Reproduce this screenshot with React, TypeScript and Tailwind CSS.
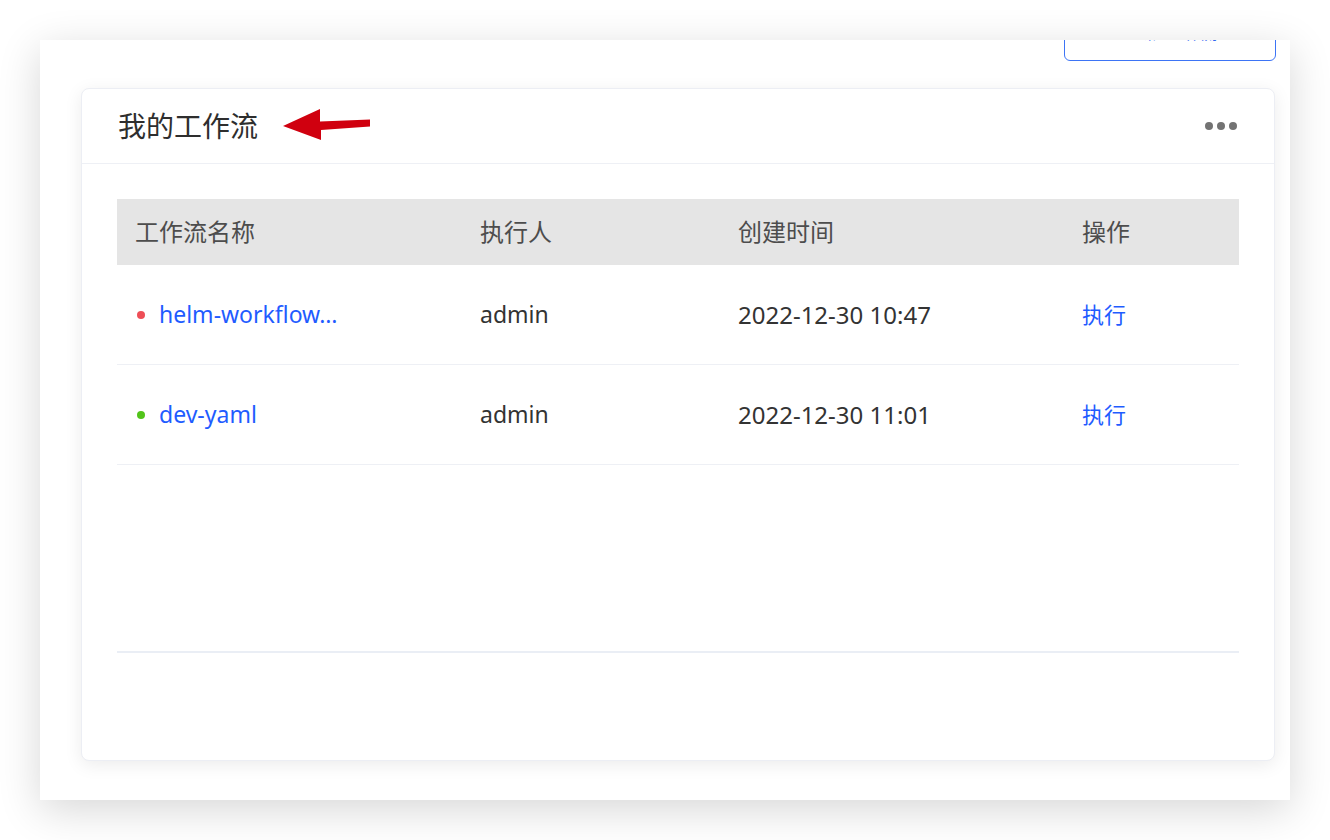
import React from 'react';

interface Workflow {
  name: string;
  status: 'failed' | 'passed';
  executor: string;
  createdAt: string;
}

const workflows: Workflow[] = [
  { name: 'helm-workflow…', status: 'failed', executor: 'admin', createdAt: '2022-12-30 10:47' },
  { name: 'dev-yaml', status: 'passed', executor: 'admin', createdAt: '2022-12-30 11:01' },
];

const font = { fontFamily: '"Noto Sans", "Noto Sans CJK SC", sans-serif' };

const cols = 'grid grid-cols-[345px_258px_344px_1fr] items-center';

export default function App() {
  return (
    <div className="w-full h-[840px] bg-white pt-[40px] pl-[40px] overflow-hidden" style={font}>
      <div className="w-[1250px] h-[760px] bg-white overflow-hidden shadow-[0_10px_40px_rgba(0,0,0,0.16)] pl-[41px] pr-[14px]">
        {/* top toolbar, cut off by the window edge */}
        <div className="flex justify-end -mt-[31px]">
          <button className="w-[212px] h-[52px] pb-[4px] rounded-[6px] border border-[#3d74f5] bg-white text-[16px] text-[#2f66f0] flex items-center justify-center">
            + 新建工作流
          </button>
        </div>

        {/* Card */}
        <div className="mt-[27px] mr-[1px] h-[673px] bg-white rounded-[8px] border border-[#eceef4] shadow-[0_4px_18px_rgba(0,0,0,0.08)]">
          <div className="h-[75px] px-[36px] flex items-center justify-between border-b border-[#eef0f5]">
            <div className="flex items-center">
              <h2 className="text-[28px] text-[#2e2e2e] leading-none">我的工作流</h2>
              <svg width="88" height="32" viewBox="0 0 88 32" className="ml-[25px] -mt-[3px]">
                <polygon points="0,17 37,0 37,12.5 87,10.5 87,17.5 38,21 38,31" fill="#d0000f" />
              </svg>
            </div>
            <div className="flex items-center gap-[4px] mr-[1px]">
              <span className="w-[8px] h-[8px] rounded-full bg-[#737373]" />
              <span className="w-[8px] h-[8px] rounded-full bg-[#737373]" />
              <span className="w-[8px] h-[8px] rounded-full bg-[#737373]" />
            </div>
          </div>

          <div className="px-[35px] pt-[35px]">
            <div className={`${cols} h-[66px] bg-[#e5e5e5] text-[24px] text-[#4d4d4d]`}>
              <span className="pl-[18px]">工作流名称</span>
              <span className="pl-[18px]">执行人</span>
              <span className="pl-[18px]">创建时间</span>
              <span className="pl-[18px]">操作</span>
            </div>
            {workflows.map((w) => (
              <div key={w.name} className={`${cols} h-[100px] border-b border-[#eef0f5] text-[23px] text-[#333]`}>
                <div className="pl-[20px] flex items-center">
                  <span
                    className={`w-[8px] h-[8px] rounded-full ${w.status === 'failed' ? 'bg-[#ee4e57]' : 'bg-[#52c41a]'}`}
                  />
                  <span className="ml-[14px] text-[#1f5cff]">{w.name}</span>
                </div>
                <span className="pl-[18px]">{w.executor}</span>
                <span className="pl-[18px] text-[24px]">{w.createdAt}</span>
                <span className="pl-[18px] text-[22px] text-[#1f5cff]">执行</span>
              </div>
            ))}
            <div className="h-[188px] border-b-2 border-[#eaeef5]" />
          </div>
        </div>
      </div>
    </div>
  );
}
